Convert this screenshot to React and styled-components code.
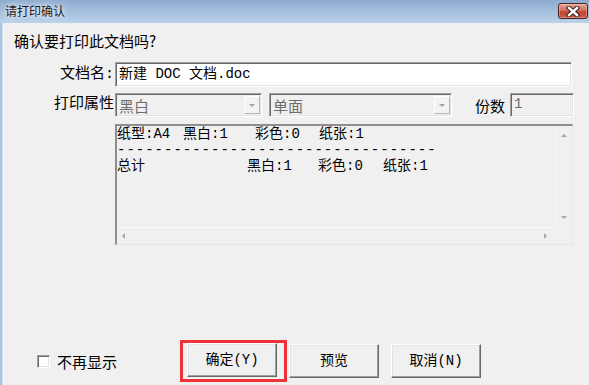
import styled, { createGlobalStyle, css } from 'styled-components';

const GlobalStyle = createGlobalStyle`
  html, body {
    margin: 0;
    padding: 0;
    background: #f0f0f0;
  }
  body {
    font-family: "Noto Sans CJK SC", sans-serif;
  }
`;

const MIXED = `"Liberation Mono", "Noto Sans CJK SC", monospace`;

/* classic win32 sunken / raised edges */
const sunken = css`
  border: 1px solid;
  border-color: #a0a0a0 #ffffff #ffffff #a0a0a0;
  box-shadow: inset 1px 1px #696969, inset -1px -1px #e3e3e3;
`;

const raised = css`
  border: 1px solid;
  border-color: #ffffff #696969 #696969 #ffffff;
  box-shadow: inset -1px -1px #a0a0a0, inset 1px 1px #e3e3e3;
`;

const Window = styled.div`
  width: 589px;
  height: 385px;
  display: flex;
  flex-direction: column;
  overflow: hidden;
`;

const TitleBar = styled.div`
  flex: none;
  height: 23px;
  box-sizing: border-box;
  padding: 0 1px 0 5px;
  display: flex;
  align-items: flex-start;
  justify-content: space-between;
  background: linear-gradient(to bottom, #8eabcf, #bbd2ea);
`;

const Title = styled.span`
  margin-top: 4px;
  font-size: 12px;
  line-height: 14px;
  color: #1b1b1b;
  text-shadow: 0 0 4px #fff, 0 0 8px rgba(255, 255, 255, 0.8);
`;

const CloseButton = styled.div`
  margin-top: 3px;
  width: 30px;
  height: 16px;
  box-sizing: border-box;
  border: 1px solid #4a2222;
  border-radius: 3px;
  display: flex;
  align-items: center;
  justify-content: center;
  background: linear-gradient(to bottom, #e6a596, #d2715d 45%, #c04631 55%, #cc5a43);
  box-shadow: inset 0 0 0 1px rgba(255, 230, 220, 0.35);
`;

const Body = styled.div`
  flex: 1;
  display: flex;
  flex-direction: column;
  background: #f0f0f0;
  border-left: 2px solid #aac3e0;
  box-shadow: inset 1px 0 #d6e4f3;
  font-size: 15px;
  color: #000;
`;

const Question = styled.div`
  margin: 8px 0 0 12px;
  line-height: 19px;
`;

const Row = styled.div`
  display: flex;
  align-items: center;
  margin-top: ${(p) => p.$top}px;
`;

const Label = styled.span`
  flex: none;
  width: 113px;
  box-sizing: border-box;
  padding-right: 1px;
  text-align: right;
  font-family: ${MIXED};
  font-size: 15px;
  line-height: 18px;
`;

const TextField = styled.div`
  ${sunken};
  box-sizing: border-box;
  width: ${(p) => p.$w}px;
  height: ${(p) => p.$h}px;
  padding: 0 3px;
  margin-left: ${(p) => p.$ml || 0}px;
  background: ${(p) => (p.$disabled ? '#f0f0f0' : '#ffffff')};
  color: ${(p) => (p.$disabled ? '#6d6d6d' : '#000')};
  font-family: ${MIXED};
  font-size: 14px;
  line-height: ${(p) => p.$h - 3}px;
  white-space: pre;
`;

const Select = styled.div`
  ${sunken};
  box-sizing: border-box;
  width: ${(p) => p.$w}px;
  height: 24px;
  margin-left: ${(p) => p.$ml || 0}px;
  padding: 0 1px 0 3px;
  display: flex;
  align-items: center;
  color: #6d6d6d;
  font-size: 15px;
`;

const DropArrow = styled.span`
  margin-left: auto;
  width: 16px;
  height: 18px;
  box-sizing: border-box;
  border: 1px solid;
  border-color: #ffffff #b5b5b5 #b5b5b5 #ffffff;
  background: #f3f3f3;
  display: flex;
  align-items: center;
  justify-content: center;

  &::after {
    content: '';
    border-left: 3px solid transparent;
    border-right: 3px solid transparent;
    border-top: 3px solid #a3a3a3;
  }
`;

const SideLabel = styled.span`
  margin-left: ${(p) => p.$ml}px;
  font-size: 15px;
`;

const ListBox = styled.div`
  margin: 7px 0 0 113px;
  width: 458px;
  height: 121px;
  box-sizing: border-box;
  border-style: solid;
  border-width: 2px 1px 1px 2px;
  border-color: #8e8e8e #e6e6e6 #e6e6e6 #8e8e8e;
  display: grid;
  grid-template-columns: 1fr 17px;
  grid-template-rows: 1fr 17px;
  background: #f0f0f0;
`;

const ListContent = styled.div`
  overflow: hidden;
  font-family: ${MIXED};
  font-size: 14px;
  line-height: 16px;
  white-space: pre;
`;

const Line = styled.div`
  display: flex;
  height: 16px;
`;

const Cell = styled.span`
  flex: none;
  width: ${(p) => (p.$w ? `${p.$w}px` : 'auto')};
`;

const Rule = styled.div`
  height: 16px;
  letter-spacing: 1px;
`;

const VScroll = styled.div`
  display: flex;
  flex-direction: column;
  align-items: center;
  justify-content: space-between;
  padding: 8px 0 8px;
  box-shadow: inset 1px 0 #fafafa;
`;

const HScroll = styled.div`
  display: flex;
  align-items: center;
  justify-content: space-between;
  padding: 0 8px 0 5px;
  box-shadow: inset 0 1px #fafafa;
`;

const Corner = styled.div`
  background: #f0f0f0;
`;

const Tri = styled.span`
  width: 0;
  height: 0;
  ${(p) =>
    p.$dir === 'up' &&
    css`
      border-left: 3px solid transparent;
      border-right: 3px solid transparent;
      border-bottom: 3px solid #a8a8a8;
    `}
  ${(p) =>
    p.$dir === 'down' &&
    css`
      border-left: 3px solid transparent;
      border-right: 3px solid transparent;
      border-top: 3px solid #a8a8a8;
    `}
  ${(p) =>
    p.$dir === 'left' &&
    css`
      border-top: 3px solid transparent;
      border-bottom: 3px solid transparent;
      border-right: 3px solid #a8a8a8;
    `}
  ${(p) =>
    p.$dir === 'right' &&
    css`
      border-top: 3px solid transparent;
      border-bottom: 3px solid transparent;
      border-left: 3px solid #a8a8a8;
    `}
`;

const Footer = styled.div`
  margin-top: auto;
  margin-bottom: 3px;
  height: 42px;
  padding-left: 35px;
  display: flex;
  align-items: center;
`;

const CheckOption = styled.label`
  flex: none;
  width: 143px;
  display: flex;
  align-items: center;
  font-size: 15px;
`;

const CheckBox = styled.span`
  ${sunken};
  width: 13px;
  height: 13px;
  box-sizing: border-box;
  background: #ffffff;
  margin-top: 1px;
`;

const CheckText = styled.span`
  margin-left: 7px;
`;

const Highlight = styled.div`
  display: flex;
  border: 3px solid #ef3439;
  padding: 0 7px 2px 4px;
`;

const Button = styled.button`
  ${raised};
  width: 90px;
  height: 34px;
  box-sizing: border-box;
  margin: 0 0 0 ${(p) => p.$ml || 0}px;
  padding: 0;
  background: #f0f0f0;
  color: #000;
  font-family: ${MIXED};
  font-size: 14px;
  line-height: 18px;
  cursor: default;
`;

const CloseIcon = () => (
  <svg width="14" height="11" viewBox="0 0 14 11">
    <path d="M3 2 L11 9 M11 2 L3 9" stroke="#3b2222" strokeWidth="4.4" strokeLinecap="square" />
    <path d="M3 2 L11 9 M11 2 L3 9" stroke="#ffffff" strokeWidth="2.4" strokeLinecap="square" />
  </svg>
);

const summary = [
  [
    ['纸型:A4', 66],
    ['黑白:1', 72],
    ['彩色:0', 64],
    ['纸张:1'],
  ],
  null,
  [
    ['总计', 130],
    ['黑白:1', 71],
    ['彩色:0', 65],
    ['纸张:1'],
  ],
];

export default function App() {
  return (
    <>
      <GlobalStyle />
      <Window>
        <TitleBar>
          <Title>请打印确认</Title>
          <CloseButton>
            <CloseIcon />
          </CloseButton>
        </TitleBar>
        <Body>
          <Question>确认要打印此文档吗?</Question>

          <Row $top={12}>
            <Label>文档名:</Label>
            <TextField $w={457} $h={25}>新建 DOC 文档.doc</TextField>
          </Row>

          <Row $top={6}>
            <Label>打印属性</Label>
            <Select $w={147}>
              黑白
              <DropArrow />
            </Select>
            <Select $w={183} $ml={7}>
              单面
              <DropArrow />
            </Select>
            <SideLabel $ml={23}>份数</SideLabel>
            <TextField $w={64} $h={24} $ml={5} $disabled>
              1
            </TextField>
          </Row>

          <ListBox>
            <ListContent>
              {summary.map((line, i) =>
                line ? (
                  <Line key={i}>
                    {line.map(([text, w]) => (
                      <Cell key={text} $w={w}>
                        {text}
                      </Cell>
                    ))}
                  </Line>
                ) : (
                  <Rule key={i}>{'-'.repeat(34)}</Rule>
                )
              )}
            </ListContent>
            <VScroll>
              <Tri $dir="up" />
              <Tri $dir="down" />
            </VScroll>
            <HScroll>
              <Tri $dir="left" />
              <Tri $dir="right" />
            </HScroll>
            <Corner />
          </ListBox>

          <Footer>
            <CheckOption>
              <CheckBox />
              <CheckText>不再显示</CheckText>
            </CheckOption>
            <Highlight>
              <Button>确定(Y)</Button>
            </Highlight>
            <Button $ml={2}>预览</Button>
            <Button $ml={12}>取消(N)</Button>
          </Footer>
        </Body>
      </Window>
    </>
  );
}
